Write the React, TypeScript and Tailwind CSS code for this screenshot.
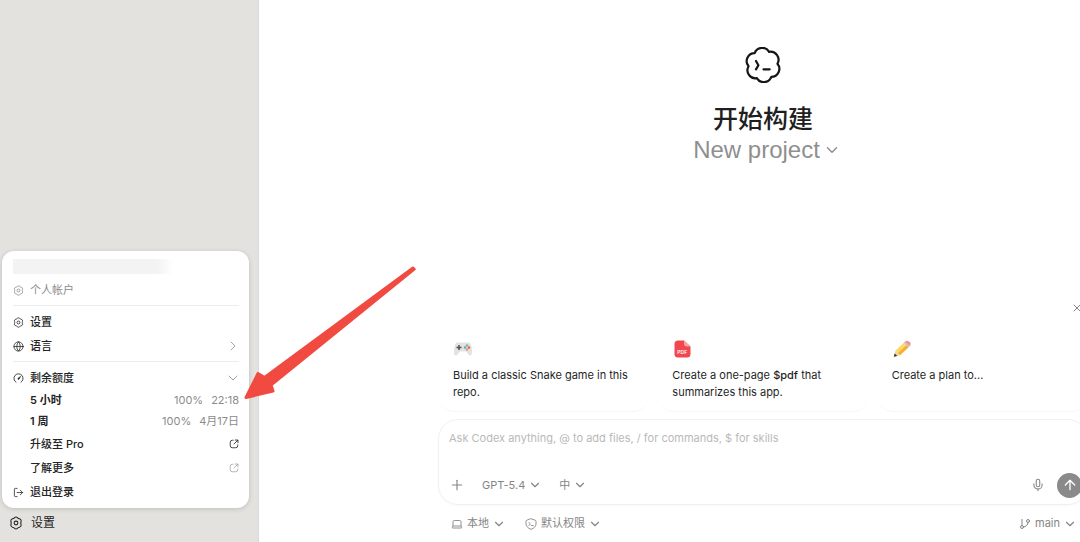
import type { ReactNode } from "react";
import { ArrowUp, ChevronDown, ChevronRight, GitBranch, Globe, Laptop, LogOut, Mic, Plus, X } from "lucide-react";

const BLOSSOM =
  "M24.13 4.86A8 8 0 0 1 32.44 16.74A8 8 0 0 1 26.32 29.88A8 8 0 0 1 11.87 31.14A8 8 0 0 1 3.56 19.26A8 8 0 0 1 9.68 6.12A8 8 0 0 1 24.13 4.86Z";

function CodexLogo() {
  return (
    <svg viewBox="0 0 36 36" className="size-9" fill="none" stroke="#161616" strokeWidth="2.2" strokeLinecap="round" strokeLinejoin="round" aria-hidden="true">
      <path d={BLOSSOM} />
      <path d="M11 14l2.4 4.2L11 22.4M18.5 22.3h6.2" />
    </svg>
  );
}

function GearIcon({ className }: { className: string }) {
  return (
    <svg viewBox="0 0 24 24" className={className} fill="none" stroke="currentColor" strokeWidth="1.8" strokeLinejoin="round" aria-hidden="true">
      <path d="M9.6 2.8Q12 .8 14.4 2.8Q15.7 4.4 17.8 4.8Q20.6 5.5 20.9 8.2Q20.3 10 20.3 12Q20.3 14 20.9 15.8Q20.6 18.5 17.8 19.2Q15.7 19.6 14.4 21.2Q12 23.2 9.6 21.2Q8.3 19.6 6.2 19.2Q3.4 18.5 3.1 15.8Q3.7 14 3.7 12Q3.7 10 3.1 8.2Q3.4 5.5 6.2 4.8Q8.3 4.4 9.6 2.8Z" />
      <circle cx="12" cy="12" r="3.2" />
    </svg>
  );
}

function GaugeIcon({ className }: { className: string }) {
  return (
    <svg viewBox="0 0 24 24" className={className} fill="none" stroke="currentColor" strokeWidth="1.8" strokeLinecap="round" aria-hidden="true">
      <path d="M6.5 20.2A10 10 0 1 1 17.5 20.2" />
      <path d="M16.5 7.8l-3.2 5.6a1.6 1.6 0 1 1-2.4-2.2z" fill="currentColor" strokeWidth="1" />
    </svg>
  );
}

function ExternalIcon({ className }: { className: string }) {
  return (
    <svg viewBox="0 0 24 24" className={className} fill="none" stroke="currentColor" strokeWidth="2" strokeLinecap="round" strokeLinejoin="round" aria-hidden="true">
      <path d="M10 3H8a5 5 0 0 0-5 5v8a5 5 0 0 0 5 5h8a5 5 0 0 0 5-5v-2M15 2.500h6.500V9M21 3l-9 9" />
    </svg>
  );
}

function ShieldIcon() {
  return (
    <svg viewBox="0 0 24 24" className="size-3" fill="none" stroke="currentColor" strokeWidth="1.8" strokeLinecap="round" strokeLinejoin="round" aria-hidden="true">
      <path d="M12 1.5l8.500 3q1.500.6 1.500 2.200V12c0 5-4.500 8.600-10 10.700C6.500 20.600 2 17 2 12V6.700q0-1.600 1.500-2.200z" />
      <path d="M8 9l2.500 3L8 15M13 15h3.500" />
    </svg>
  );
}

function GamepadIcon() {
  return (
    <svg viewBox="0 0 20 18" className="h-[18px] w-5" aria-hidden="true">
      <path d="M5 2.500h10c2.500 0 3.200 2 3.700 5.500.5 3.300.8 7-1.200 7.500-2 .4-3-3-4.500-4H7c-1.500 1-2.500 4.400-4.500 4C.5 15 .8 11.300 1.300 8 1.800 4.500 2.500 2.500 5 2.500z" fill="#e3e3e3" />
      <path d="M6 5v5M3.500 7.500h5" stroke="#555" strokeWidth="1.600" />
      <circle cx="14" cy="5.500" r="1.200" fill="#6fbf8c" />
      <circle cx="12" cy="7.500" r="1.200" fill="#5aa9e6" />
      <circle cx="16" cy="7.500" r="1.200" fill="#ee5a50" />
      <circle cx="14" cy="9.500" r="1.200" fill="#f0935a" />
    </svg>
  );
}

function PdfIcon() {
  return (
    <svg viewBox="0 0 20 18" className="h-[18px] w-5" aria-hidden="true">
      <path d="M6 .5h6L18.500 6.500V14a3.500 3.500 0 0 1-3.500 3.500H6A3.500 3.500 0 0 1 2.500 14V4A3.500 3.500 0 0 1 6 .5z" fill="#f0484e" />
      <path d="M12 .5l6.500 6H15a3 3 0 0 1-3-3z" fill="#f9a3a5" />
      <text x="10.200" y="14.200" textAnchor="middle" fontSize="5" fontWeight="600" fill="#fff" fontFamily="Inter, sans-serif">PDF</text>
    </svg>
  );
}

function PencilIcon() {
  return (
    <svg viewBox="0 0 20 18" className="h-[18px] w-5" aria-hidden="true">
      <path d="M1.800 16.800l1.500-6 4.800 4.500z" fill="#f4d3a4" />
      <path d="M1.800 16.800l.9-3.300 2.600 2.400z" fill="#333" />
      <path d="M3.300 10.800L11.800 2.800l2.500 2.300-8.600 8z" fill="#fbd964" />
      <path d="M5.700 13.100l8.600-8 2.400 2.200-8.600 8z" fill="#f5b22c" />
      <path d="M11.800 2.800l1.200-1.200 4.900 4.500-1.200 1.200z" fill="#c3bfc4" />
      <path d="M13 1.600c1.200-1.100 2.800-1.200 4-.2l.9.900c1 1.200 1 2.600 0 3.800z" fill="#ee8f98" />
    </svg>
  );
}

// Red pointer that leads from the page to the remaining quota
function Pointer() {
  return (
    <svg viewBox="0 0 176 136" className="pointer-events-none absolute top-[14px] left-[239px] h-[136px] w-[176px]" aria-hidden="true">
      <path d="M5 132.500L17 108.500l6.500 4L172 3l1.200 1.200L30 120l2 6z" fill="#f04a41" stroke="#f04a41" strokeWidth="3" strokeLinejoin="round" />
    </svg>
  );
}

type PickerProps = {
  label: string;
  value: string;
  className?: string;
  chevron?: string;
};

function Picker({ label, value, className = "", chevron = "size-3.5" }: PickerProps) {
  return (
    <span className={`flex items-center gap-[3px] ${className}`}>
      <select aria-label={label} className="field-sizing-content cursor-pointer appearance-none bg-transparent outline-none">
        <option>{value}</option>
      </select>
      <ChevronDown className={`pointer-events-none shrink-0 ${chevron}`} />
    </span>
  );
}

type MenuItemProps = { icon?: ReactNode; label: string; trailing?: ReactNode; href?: string };

function MenuItem({ icon, label, trailing, href }: MenuItemProps) {
  const content = (
    <>
      <span className="w-[11px] shrink-0">{icon}</span>
      <span className="flex-1 text-left">{label}</span>
      {trailing}
    </>
  );
  const row = "flex h-6 w-full items-center gap-1.5 font-medium";

  return href ? (
    <a href={href} className={row}>{content}</a>
  ) : (
    <button type="button" className={row}>{content}</button>
  );
}

function QuotaRow({ name, percent, reset }: { name: string; percent: string; reset: string }) {
  return (
    <div className="flex h-[21px] items-center pl-[17px]">
      <dt className="flex-1 font-semibold">{name}</dt>
      <dd className="flex gap-2 text-[#8b8b8b]">
        <span>{percent}</span>
        <span>{reset}</span>
      </dd>
    </div>
  );
}

function AccountMenu() {
  return (
    <div className="relative z-10 mr-[9px] ml-0.5">
      <div className="rounded-xl bg-white pt-2 pr-[10px] pb-1 pl-[11px] text-[11px] text-[#242424] shadow-[0_1px_5px_rgba(0,0,0,0.16)]">
        <div className="mb-1 h-[15px] w-40 bg-linear-to-r from-[#f3f3f3] from-90% to-white" />
        <div className="flex h-6 items-center gap-1.5 text-[#8c8c8c]">
          <GearIcon className="size-[11px]" />
          <span>个人帐户</span>
        </div>
        <hr className="mt-[3px] mb-1 border-[#ececec]" />
        <MenuItem icon={<GearIcon className="size-[11px]" />} label="设置" />
        <MenuItem icon={<Globe className="size-[11px]" strokeWidth={1.7} />} label="语言" trailing={<ChevronRight className="-mr-0.5 size-4 text-[#a5a5a5]" strokeWidth={1.5} />} />
        <hr className="mt-[3px] mb-1 border-[#ececec]" />
        <MenuItem icon={<GaugeIcon className="size-[11px]" />} label="剩余额度" trailing={<ChevronDown className="-mr-0.5 size-4 text-[#a5a5a5]" strokeWidth={1.5} />} />
        <dl>
          <QuotaRow name="5 小时" percent="100%" reset="22:18" />
          <QuotaRow name="1 周" percent="100%" reset="4月17日" />
        </dl>
        <MenuItem href="#upgrade" label="升级至 Pro" trailing={<ExternalIcon className="size-2.5" />} />
        <MenuItem href="#learn-more" label="了解更多" trailing={<ExternalIcon className="size-2.5 text-[#a5a5a5]" />} />
        <MenuItem icon={<LogOut className="size-[11px]" strokeWidth={1.7} />} label="退出登录" />
      </div>
      <Pointer />
    </div>
  );
}

function Sidebar() {
  return (
    <aside className="flex w-[259px] shrink-0 flex-col justify-end border-r border-[#d9d9d7] bg-[#e3e2df] pb-1">
      <AccountMenu />
      <button type="button" className="flex h-[30px] items-center gap-2 pl-[9px] text-xs text-[#242424]">
        <GearIcon className="size-3.5" />
        设置
      </button>
    </aside>
  );
}

function Suggestion({ icon, children }: { icon: ReactNode; children: ReactNode }) {
  return (
    <button type="button" className="flex h-[82px] flex-col items-start rounded-2xl border-b border-[#f7f7f7] px-[15px] pt-[10px] text-left text-[11px] leading-[17px]">
      {icon}
      <span className="mt-[9px] flex flex-col">{children}</span>
    </button>
  );
}

function Composer() {
  return (
    <form className="rounded-[20px] border border-[#f0f0f0] shadow-[0_1px_2px_rgba(0,0,0,0.03)]">
      <textarea
        aria-label="Message"
        rows={1}
        placeholder="Ask Codex anything, @ to add files, / for commands, $ for skills"
        className="block h-[50px] w-full resize-none bg-transparent px-[10px] pt-[10px] text-[11px] leading-4 outline-none placeholder:text-[#b9b9b9]"
      />
      <div className="flex h-[34px] items-start pr-[5px] pl-[10px] text-[11px] text-[#858585]">
        <div className="flex h-[30px] flex-1 items-center">
          <button type="button" aria-label="Add files">
            <Plus className="size-4" strokeWidth={1.7} />
          </button>
          <Picker label="Model" value="GPT-5.4" className="ml-[17px]" />
          <Picker label="Reasoning" value="中" className="ml-[17px]" />
        </div>
        <div className="flex h-[30px] items-center gap-3">
          <button type="button" aria-label="Dictate">
            <Mic className="size-3.5" strokeWidth={1.8} />
          </button>
          <button type="submit" aria-label="Send" className="flex size-[25px] items-center justify-center rounded-full bg-[#8a8a8a] text-white">
            <ArrowUp className="size-4" />
          </button>
        </div>
      </div>
    </form>
  );
}

export default function App() {
  return (
    <div className="flex min-h-screen overflow-hidden bg-[#e3e2df] font-[Inter,'Noto_Sans_CJK_SC',sans-serif] text-[#1f1f1f]">
      <Sidebar />
      <main className="min-w-0 flex-1 bg-white pl-[179px]">
        <div className="-mr-2 flex h-full flex-col justify-between">
          <header className="flex flex-col items-center pt-[47px]">
            <CodexLogo />
            <h1 className="mt-5 text-[25px] leading-8 font-medium">开始构建</h1>
            <Picker label="Project" value="New project" chevron="size-[18px]" className="h-[30px] pl-2 font-['Liberation_Sans',sans-serif] text-2xl text-[#8f8f8f]" />
          </header>

          <section className="mt-20">
            <div className="flex justify-end pr-[5px]">
              <button type="button" aria-label="Dismiss suggestions" className="text-[#858585]">
                <X className="size-3" strokeWidth={2} />
              </button>
            </div>
            <div className="mt-4 mb-[7px] grid grid-cols-3 gap-2">
              <Suggestion icon={<GamepadIcon />}>Build a classic Snake game in this repo.</Suggestion>
              <Suggestion icon={<PdfIcon />}>
                <span>Create a one-page <span className="font-medium">$pdf</span> that</span>
                <span>summarizes this app.</span>
              </Suggestion>
              <Suggestion icon={<PencilIcon />}>Create a plan to...</Suggestion>
            </div>
            <Composer />
            <div className="flex h-[37px] items-center pr-[11px] pl-[13px] text-[11px] text-[#858585]">
              <Laptop className="size-3" strokeWidth={1.8} />
              <Picker label="Run location" value="本地" className="ml-1" />
              <span className="ml-[19px]">
                <ShieldIcon />
              </span>
              <Picker label="Permissions" value="默认权限" className="ml-1 flex-1" />
              <GitBranch className="size-3" />
              <Picker label="Branch" value="main" className="ml-1" />
            </div>
          </section>
        </div>
      </main>
    </div>
  );
}
